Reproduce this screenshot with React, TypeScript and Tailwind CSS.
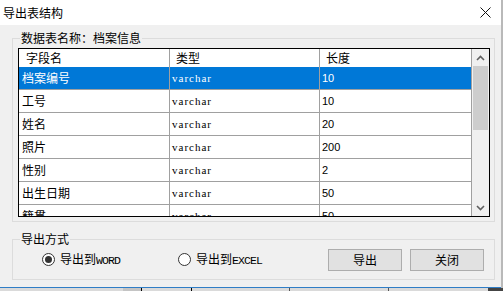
import { useState } from "react";

type Field = { name: string; type: string; len: string };

const fields: Field[] = [
  { name: "档案编号", type: "varchar", len: "10" },
  { name: "工号", type: "varchar", len: "10" },
  { name: "姓名", type: "varchar", len: "20" },
  { name: "照片", type: "varchar", len: "200" },
  { name: "性别", type: "varchar", len: "2" },
  { name: "出生日期", type: "varchar", len: "50" },
  { name: "籍贯", type: "varchar", len: "50" },
];

function Radio({ checked, suffix, onClick }: { checked: boolean; suffix: string; onClick: () => void }) {
  return (
    <button className="flex items-center gap-[5px]" onClick={onClick}>
      <span className="flex h-[13px] w-[13px] items-center justify-center rounded-full border border-[#333] bg-white">
        {checked && <span className="h-[7px] w-[7px] rounded-full bg-[#333]" />}
      </span>
      <span className="text-[12px] leading-none">
        导出到
        <span className="font-['Liberation_Mono',monospace] text-[11.5px] tracking-[-0.9px]">{suffix}</span>
      </span>
    </button>
  );
}

export default function App() {
  const [selected, setSelected] = useState(0);
  const [mode, setMode] = useState<"word" | "excel">("word");

  return (
    <div className="h-[291px] w-[503px] overflow-hidden bg-[#b9b9b9] font-['Noto_Sans_CJK_SC',sans-serif] text-black">
      <div className="flex h-[288px] w-[501px] flex-col border-b border-[#2f7dc6] bg-[#f0f0f0]">
        {/* title bar */}
        <div className="flex h-[25px] items-center justify-between bg-white pl-[3px] pr-[10px]">
          <span className="text-[12px] leading-none">导出表结构</span>
          <svg width="11" height="11" viewBox="0 0 11 11" className="mt-[-1px]">
            <path d="M0.5 0.5 L10.5 10.5 M10.5 0.5 L0.5 10.5" stroke="#111" strokeWidth="1" />
          </svg>
        </div>

        <div className="flex flex-col pl-[12px]">
          {/* table group */}
          <div className="relative mt-[13px] h-[184px] w-[483px] border border-[#dcdcdc] pl-[5px] pt-[9px]">
            <span className="absolute left-[7px] top-[-7px] bg-[#f0f0f0] px-px text-[12px] leading-none">
              数据表名称：档案信息
            </span>
            <div className="flex h-[169px] w-[472px] border border-black bg-white">
              <div className="flex w-[453px] flex-col overflow-hidden">
                <div className="flex h-[18px] shrink-0 text-[12px] leading-none">
                  <div className="flex w-[151px] items-center border-r border-[#a0a0a0] pl-[7px]">字段名</div>
                  <div className="flex w-[150px] items-center border-r border-[#a0a0a0] pl-[6px]">类型</div>
                  <div className="flex w-[152px] items-center border-r border-[#a0a0a0] pl-[6px]">长度</div>
                </div>
                {fields.map((f, i) => {
                  const sel = i === selected;
                  return (
                    <div
                      key={f.name}
                      onClick={() => setSelected(i)}
                      className={`flex h-[23px] shrink-0 border-b border-[#a0a0a0] ${sel ? "bg-[#0078d7] text-white" : "bg-white"}`}
                    >
                      <div className="flex w-[151px] items-center border-r border-[#a0a0a0] pl-[3px] text-[12px] leading-none">
                        {f.name}
                      </div>
                      <div className="flex w-[150px] items-center border-r border-[#a0a0a0] pl-[2px] font-['Liberation_Serif',serif] text-[11px] leading-none tracking-[1px]">
                        {f.type}
                      </div>
                      <div className="flex w-[152px] items-center border-r border-[#a0a0a0] pl-[2px] font-['Liberation_Sans',sans-serif] text-[11px] leading-none">
                        {f.len}
                      </div>
                    </div>
                  );
                })}
              </div>
              {/* scrollbar */}
              <div className="flex w-[17px] flex-col bg-[#f0f0f0]">
                <div className="flex h-[17px] items-center justify-center">
                  <svg width="9" height="6" viewBox="0 0 9 6">
                    <polyline points="1,5 4.5,1.5 8,5" fill="none" stroke="#606060" strokeWidth="1.6" />
                  </svg>
                </div>
                <div className="mx-px h-[64px] bg-[#cdcdcd]" />
                <div className="flex-1" />
                <div className="flex h-[17px] items-center justify-center">
                  <svg width="9" height="6" viewBox="0 0 9 6">
                    <polyline points="1,1 4.5,4.5 8,1" fill="none" stroke="#606060" strokeWidth="1.6" />
                  </svg>
                </div>
              </div>
            </div>
          </div>

          {/* export mode group */}
          <div className="relative mt-[17px] flex h-[41px] w-[483px] items-center border border-[#dcdcdc] pl-[29px] pr-[10px]">
            <span className="absolute left-[7px] top-[-7px] bg-[#f0f0f0] px-px text-[12px] leading-none">导出方式</span>
            <div className="w-[136px]">
              <Radio checked={mode === "word"} suffix="WORD" onClick={() => setMode("word")} />
            </div>
            <Radio checked={mode === "excel"} suffix="EXCEL" onClick={() => setMode("excel")} />
            <div className="ml-auto flex gap-[8px]">
              <button className="h-[22px] w-[74px] border border-[#adadad] bg-[#e1e1e1] text-[12px] leading-none">导出</button>
              <button className="h-[22px] w-[74px] border border-[#adadad] bg-[#e1e1e1] text-[12px] leading-none">关闭</button>
            </div>
          </div>
        </div>
      </div>
      {/* window behind */}
      <div className="flex h-[3px] bg-[#dadada]">
        <div className="ml-[123px] w-[18px] bg-[#c4c4c4]" />
        <div className="w-px bg-black" />
        <div className="ml-[50px] w-px bg-black" />
        <div className="ml-[97px] w-px bg-[#555]" />
        <div className="ml-[98px] w-px bg-[#555]" />
        <div className="ml-[99px] w-[15px] bg-[#444]" />
      </div>
    </div>
  );
}
